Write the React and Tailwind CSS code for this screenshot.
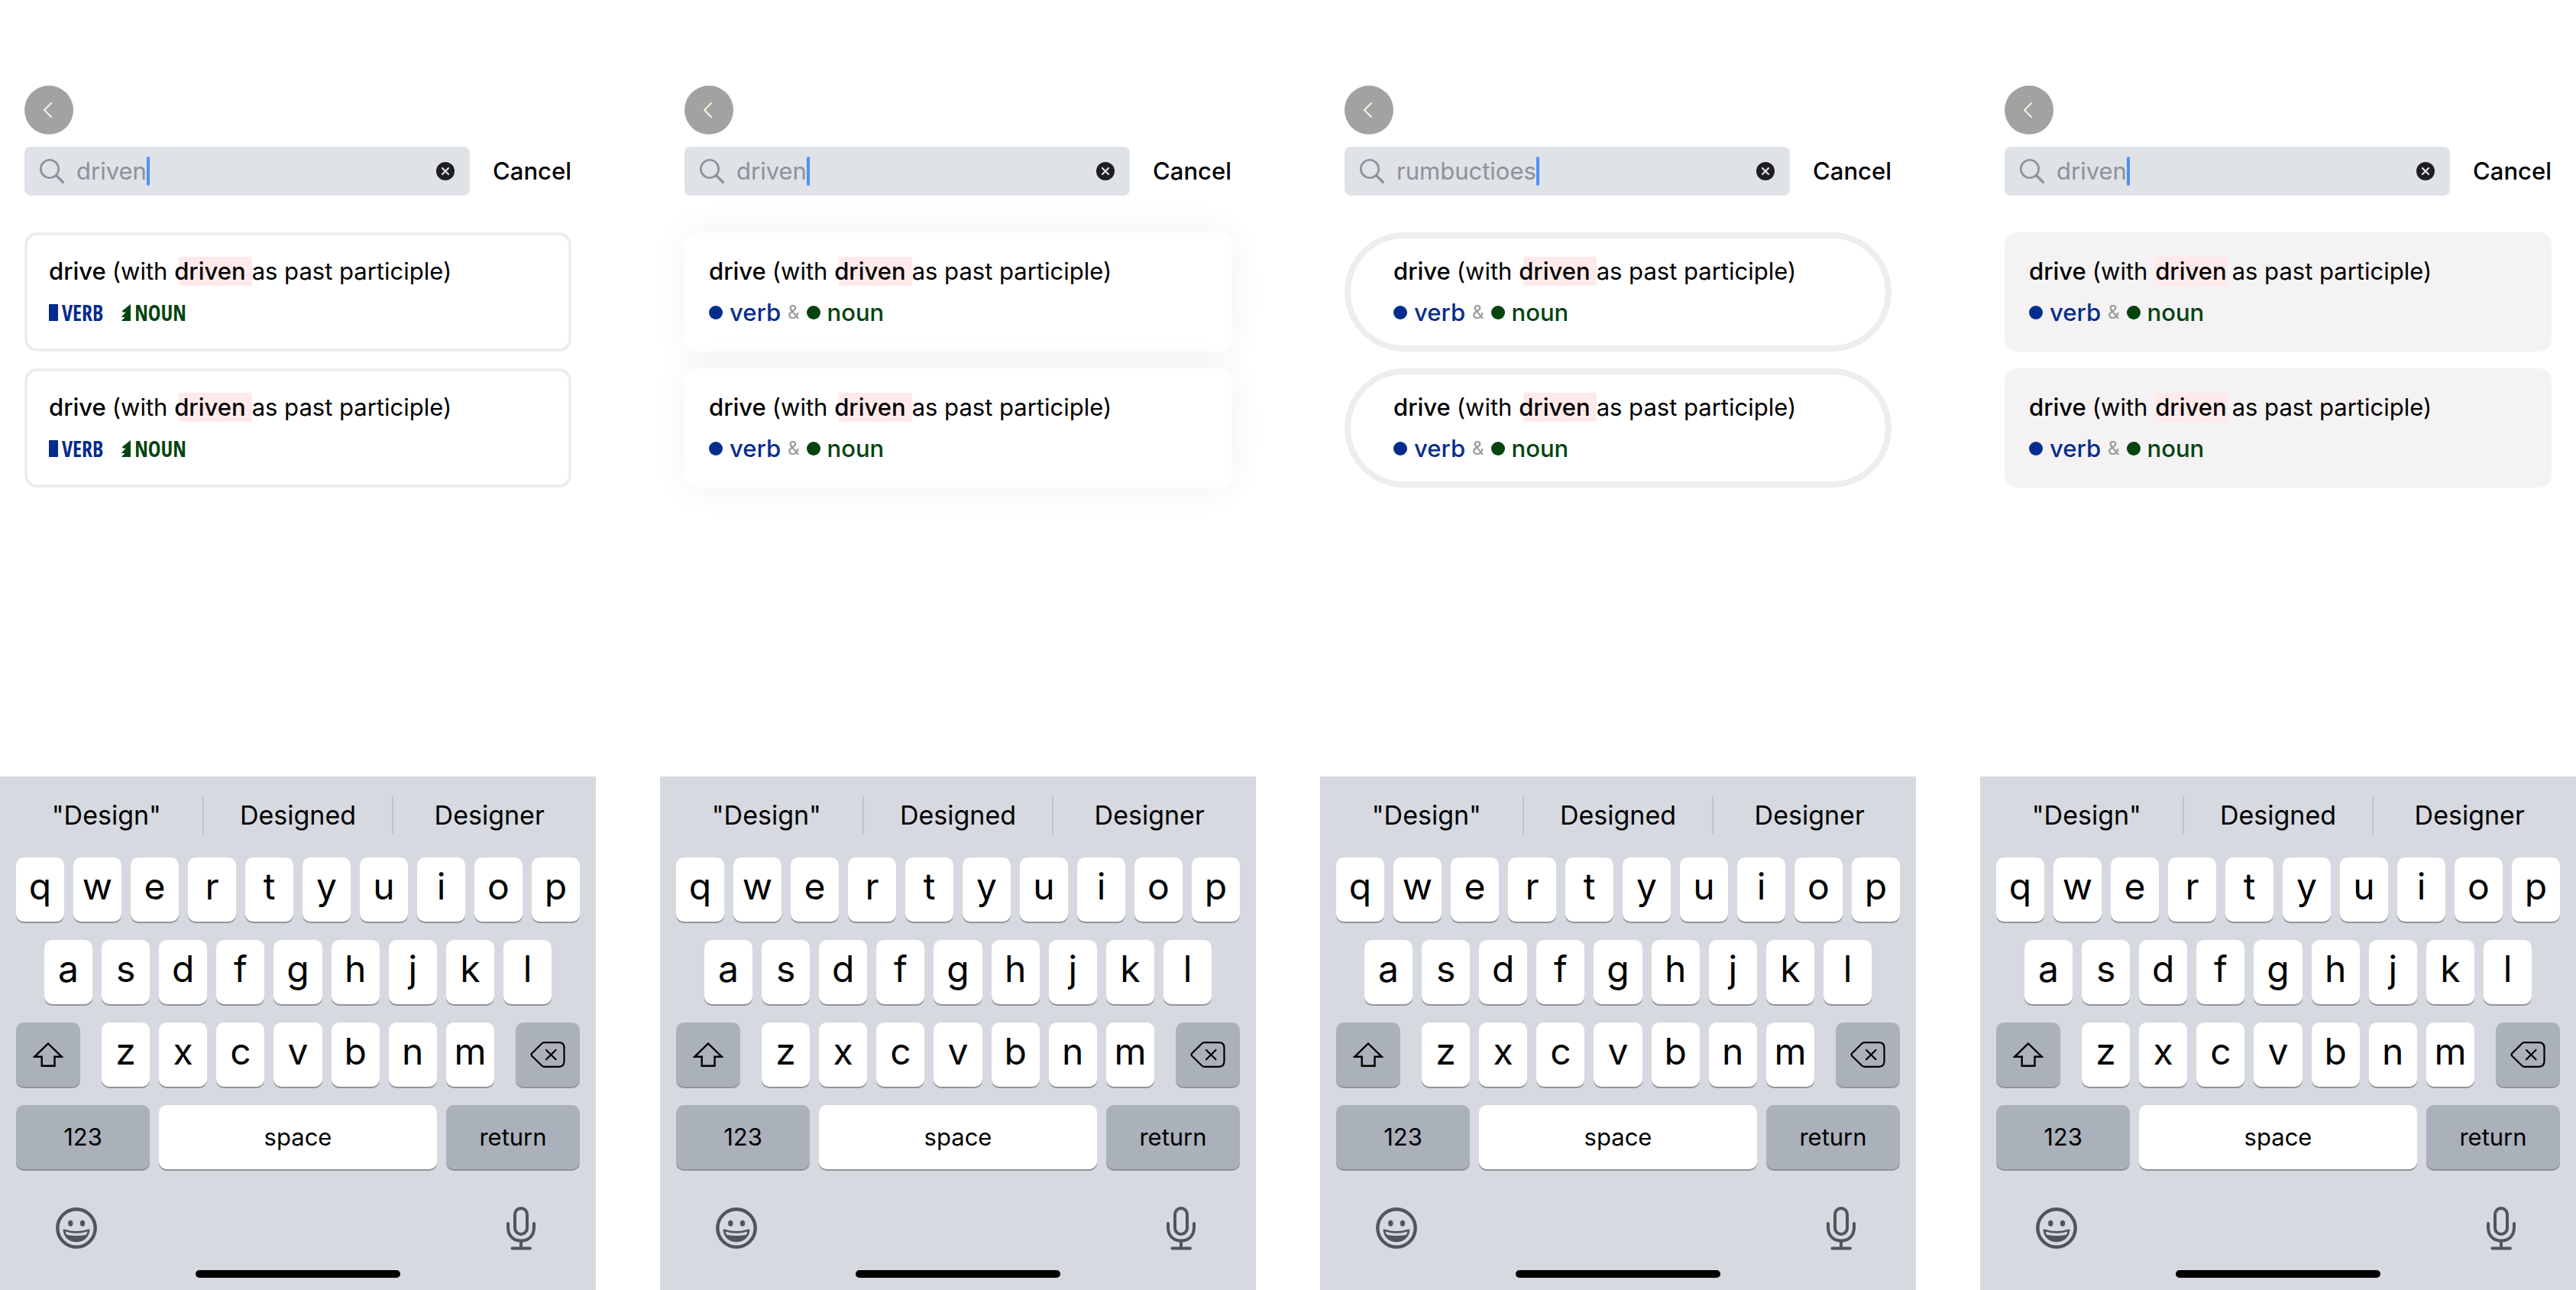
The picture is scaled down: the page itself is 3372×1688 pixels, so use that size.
import React from "react";

const BackIcon = () => (
  <svg viewBox="0 0 64 64" className="size-16" fill="none" stroke="#f7f1df" strokeWidth="2" strokeLinecap="round" strokeLinejoin="round" aria-hidden="true">
    <path d="M35 23 26 32 35 41" />
  </svg>
);

const SearchIcon = () => (
  <svg viewBox="0 0 32 32" className="size-8 shrink-0" fill="none" stroke="#8e919b" strokeWidth="2.6" strokeLinecap="round" aria-hidden="true">
    <circle cx="13" cy="13" r="11.700" />
    <path d="M21.500 21.500 30.500 30.500" strokeWidth="3.200" />
  </svg>
);

const ClearIcon = () => (
  <svg viewBox="0 0 24 24" className="size-6" aria-hidden="true">
    <circle cx="12" cy="12" r="12" fill="#1f1f21" />
    <path d="M8 8l8 8M16 8l-8 8" stroke="#e0e3e8" strokeWidth="2.200" strokeLinecap="round" />
  </svg>
);

const ShiftIcon = () => (
  <svg viewBox="0 0 40 32" className="h-8 w-10" fill="none" stroke="#000" strokeWidth="2.400" strokeLinejoin="miter" aria-hidden="true">
    <path d="M20 1.500 37.800 18.800H28.500V30.800H11.700V18.800H2.200Z" />
  </svg>
);

const DeleteIcon = () => (
  <svg viewBox="0 0 46 34" className="h-[34px] w-[46px]" fill="none" stroke="#000" strokeWidth="2.200" strokeLinecap="round" strokeLinejoin="round" aria-hidden="true">
    <path d="M18.500 1.200H37.500Q44.500 1.200 44.500 8.200V25.800Q44.500 32.800 37.500 32.800H18.500Q16.500 32.800 15 31.300L2.300 18.700Q.800 17 2.300 15.300L15 2.700Q16.500 1.200 18.500 1.200Z" />
    <path d="M21 11 33.500 23.300M33.500 11 21 23.300" />
  </svg>
);

const EmojiIcon = () => (
  <svg viewBox="0 0 54 54" className="size-[54px]" aria-hidden="true">
    <circle cx="27" cy="27" r="24.700" fill="none" stroke="#50555c" strokeWidth="4.400" />
    <ellipse cx="19.300" cy="20.700" rx="3.200" ry="4" fill="#50555c" />
    <ellipse cx="35" cy="20.700" rx="3.200" ry="4" fill="#50555c" />
    <path d="M9.500 29.500Q9.500 28 11.500 28.500Q27 33.500 42.500 28.500Q44.500 28 44.500 29.500C43.500 39.500 36 45.300 27 45.300S10.500 39.500 9.500 29.500Z" fill="#50555c" />
    <path d="M12.700 31.500Q27 36 41.300 31.500Q41 33.500 39.800 35.700Q27 38.500 14.200 35.700Q13 33.500 12.700 31.500Z" fill="#d2d8dc" />
  </svg>
);

const MicIcon = () => (
  <svg viewBox="0 0 38 58" className="h-[58px] w-[38px]" fill="none" stroke="#50555c" strokeWidth="4" strokeLinecap="round" aria-hidden="true">
    <rect x="11" y="3" width="16" height="34" rx="8" />
    <path d="M2 23V28C2 39 9 45.500 19 45.500S36 39 36 28V23M19 45.500V55M7.500 55.500H31" />
  </svg>
);

const Highlight = ({ full }) => (
  <mark
    className={
      full
        ? "inline-block bg-[#ffeae9] px-px leading-[38px] font-medium text-black"
        : "inline-block bg-transparent bg-[linear-gradient(to_right,transparent_6px,#ffeae9_6px)] pr-2 leading-[38px] font-medium text-black"
    }
  >
    driven
  </mark>
);

const BadgeLine = () => (
  <p className="flex h-10 items-center gap-6 font-['Open_Sans_Condensed','Roboto_Condensed',sans-serif] text-[28px] leading-10 font-bold">
    <span className="flex items-center gap-[5px] text-[#042c8d]">
      <svg viewBox="0 0 12 22" className="h-[22px] w-3" fill="currentColor" aria-hidden="true">
        <rect width="12" height="22" />
      </svg>
      VERB
    </span>
    <span className="flex items-center gap-[5px] text-[#03440f]">
      <svg viewBox="0 0 12 22" className="h-[22px] w-3" fill="currentColor" aria-hidden="true">
        <path d="M12 0V22H0L4.500 17H0L5.500 10.500H1.500L1 8.700Z" />
      </svg>
      NOUN
    </span>
  </p>
);

const DotLine = () => (
  <p className="flex h-10 items-center gap-[9px] text-[31px] leading-[38px] font-medium">
    <span className="flex items-center gap-[9px] text-[#042c8d]">
      <i className="size-[18px] rounded-full bg-current" />
      verb
    </span>
    <span className="text-2xl font-normal text-[#999]">&amp;</span>
    <span className="flex items-center gap-[9px] text-[#03440f]">
      <i className="size-[18px] rounded-full bg-current" />
      noun
    </span>
  </p>
);

const cardStyles = {
  outline: "rounded-2xl px-8 shadow-[inset_0_0_0_4px_#ededec]",
  shadow: "rounded-2xl bg-white px-8 shadow-[0_0_48px_rgba(0,0,0,0.06)]",
  pill: "rounded-full px-16 shadow-[inset_0_0_0_8px_#ededec]",
  filled: "rounded-2xl bg-[#f4f2f3] px-8",
};

const ResultCard = ({ variant }) => (
  <li className={`flex flex-col gap-[15px] pt-8 pb-[31px] ${cardStyles[variant]}`}>
    <p className="flex h-[38px] items-center text-[31px] leading-[38px] whitespace-pre text-black">
      <strong className="pr-2 font-medium">drive</strong>
      <span>(with </span>
      <Highlight full={variant === "filled"} />
      <span className={variant === "filled" ? "pl-1.5" : ""}>as past participle)</span>
    </p>
    {variant === "outline" ? <BadgeLine /> : <DotLine />}
  </li>
);

const keyBase = "flex h-[84px] items-center justify-center rounded-[10px] shadow-[0_2px_0_#909398] text-black";

const LetterKeys = ({ letters }) =>
  letters.split("").map((letter) => (
    <button key={letter} type="button" className={`${keyBase} bg-white pb-2 text-5xl`}>
      {letter}
    </button>
  ));

const Keyboard = () => (
  <section aria-label="Keyboard" className="mt-auto bg-[#d6d9df] px-[21px] pb-4">
    <div className="-mx-[21px] grid grid-cols-3 items-center px-[14px] py-[26px] text-[34px] leading-[50px] text-black">
      <button type="button">"Design"</button>
      <button type="button" className="border-x-2 border-[#bfc2c8]">Designed</button>
      <button type="button">Designer</button>
    </div>
    <div className="mt-1 flex flex-col gap-6">
      <div className="grid grid-cols-10 gap-3">
        <LetterKeys letters="qwertyuiop" />
      </div>
      <div className="grid grid-cols-9 gap-3 px-[5%]">
        <LetterKeys letters="asdfghjkl" />
      </div>
      <div className="flex gap-7">
        <button type="button" aria-label="Shift" className={`${keyBase} w-21 bg-[#abb1bb]`}>
          <ShiftIcon />
        </button>
        <div className="grid flex-1 grid-cols-7 gap-3">
          <LetterKeys letters="zxcvbnm" />
        </div>
        <button type="button" aria-label="Delete" className={`${keyBase} w-21 bg-[#abb1bb]`}>
          <DeleteIcon />
        </button>
      </div>
      <div className="grid grid-cols-[175fr_364fr_175fr] gap-3 text-[31px]">
        <button type="button" className={`${keyBase} bg-[#abb1bb]`}>123</button>
        <button type="button" className={`${keyBase} bg-white`}>space</button>
        <button type="button" className={`${keyBase} bg-[#abb1bb]`}>return</button>
      </div>
    </div>
    <div className="mt-12 flex items-center justify-between pr-[58px] pl-[52px]">
      <button type="button" aria-label="Emoji"><EmojiIcon /></button>
      <button type="button" aria-label="Dictate"><MicIcon /></button>
    </div>
    <div className="mx-auto mt-[26px] h-2.5 w-[268px] rounded-full bg-black" />
  </section>
);

const Phone = ({ id, query, variant }) => (
  <main className="flex min-h-screen flex-col bg-white pt-28">
    <header className="flex flex-col gap-4 px-8">
      <button type="button" aria-label="Back" className="size-16 rounded-full bg-[#a2a2a2]">
        <BackIcon />
      </button>
      <div className="flex items-center gap-[30px]">
        <div className="flex h-16 flex-1 items-center rounded-lg bg-[#dfe2e7] pr-5 pl-5">
          <label htmlFor={id} aria-label="Search"><SearchIcon /></label>
          <input
            id={id}
            type="text"
            aria-label="Search"
            defaultValue={query}
            className="ml-4 h-12 [field-sizing:content] text-[31px] leading-12 text-[#8e919b] outline-none"
          />
          <i className="h-[38px] w-1 rounded-sm bg-[#4f8ff7]" />
          <button type="button" aria-label="Clear" className="ml-auto">
            <ClearIcon />
          </button>
        </div>
        <button type="button" className="text-[31px] leading-[38px] font-medium text-black">Cancel</button>
      </div>
    </header>
    <ul className="mt-12 mb-12 flex flex-col gap-[22px] px-8">
      <ResultCard variant={variant} />
      <ResultCard variant={variant} />
    </ul>
    <Keyboard />
  </main>
);

export default function App() {
  return (
    <div className="grid grid-cols-4 gap-21 bg-white font-[Inter,'Liberation_Sans',sans-serif]">
      <Phone id="search-outline" query="driven" variant="outline" />
      <Phone id="search-shadow" query="driven" variant="shadow" />
      <Phone id="search-pill" query="rumbuctioes" variant="pill" />
      <Phone id="search-filled" query="driven" variant="filled" />
    </div>
  );
}
